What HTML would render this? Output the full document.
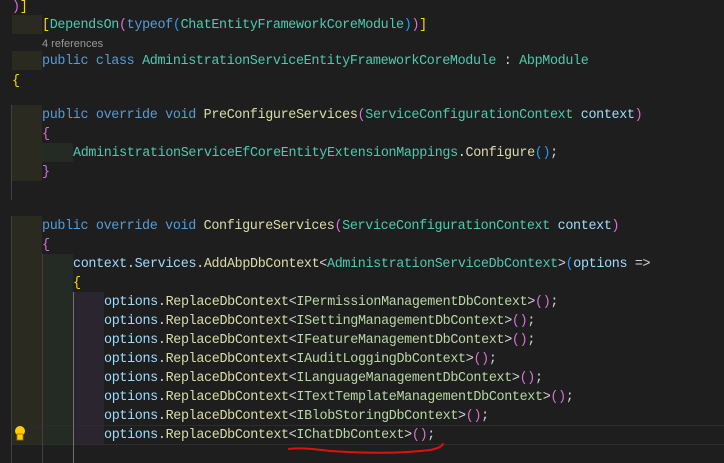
<!DOCTYPE html>
<html><head><meta charset="utf-8"><style>
body{margin:0;width:724px;height:463px;background:#1e1e1e;overflow:hidden;position:relative;font-family:"Liberation Mono",monospace;font-size:13.4px;letter-spacing:-0.34px;}
.l{position:absolute;left:0;height:19px;line-height:19px;margin-top:1px;white-space:pre;color:#d4d4d4;}
.hl{position:absolute;height:19px;}
.c1{left:12px;width:30px;background:#2a2a20;}
.c2{left:42px;width:31px;background:#232b24;}
.c3{left:73px;width:31px;background:#2b2530;}
.g{position:absolute;width:1px;background:#404040;}
.k{color:#569cd6}.t{color:#4ec9b0}.m{color:#dcdcaa}.p{color:#9cdcfe}.i{color:#b8d7a3}
.y{color:#ffd700}.pk{color:#da70d6}.b{color:#179fff}
</style></head><body>
<div class="hl c1" style="top:15px"></div>
<div class="hl c1" style="top:51px"></div>
<div class="hl c1" style="top:105px;height:76px"></div>
<div class="hl c2" style="top:143px"></div>
<div class="hl c1" style="top:216px;height:228px"></div>
<div class="hl c2" style="top:254px;height:190px"></div>
<div class="hl c3" style="top:292px;height:152px"></div>
<div style="position:absolute;left:12px;top:425px;width:712px;height:18px;border-top:1px solid #2c2c2c;border-bottom:1px solid #2c2c2c;"></div>
<div class="g" style="left:11px;top:105px;height:95px"></div>
<div class="g" style="left:11px;top:216px;height:247px"></div>
<div class="g" style="left:42px;top:254px;height:209px"></div>
<div class="g" style="left:73px;top:292px;height:171px;background:#707070"></div>

<div class="l" style="top:-3px;left:12px"><span class="pk">)</span><span class="y">]</span></div>
<div class="l" style="top:15px;left:42px"><span class="y">[</span><span class="t">DependsOn</span><span class="pk">(</span><span class="k">typeof</span><span class="b">(</span><span class="t">ChatEntityFrameworkCoreModule</span><span class="b">)</span><span class="pk">)</span><span class="y">]</span></div>
<div class="l" style="top:34px;left:42px;font-family:'Liberation Sans',sans-serif;font-size:11px;letter-spacing:0;color:#999">4 references</div>
<div class="l" style="top:51px;left:42px"><span class="k">public class</span> <span class="t">AdministrationServiceEntityFrameworkCoreModule</span> : <span class="t">AbpModule</span></div>
<div class="l" style="top:71px;left:12px"><span class="y">{</span></div>
<div class="l" style="top:105px;left:42px"><span class="k">public override void</span> <span class="m">PreConfigureServices</span><span class="pk">(</span><span class="t">ServiceConfigurationContext</span> <span class="p">context</span><span class="pk">)</span></div>
<div class="l" style="top:124px;left:42px"><span class="pk">{</span></div>
<div class="l" style="top:143px;left:73px"><span class="t">AdministrationServiceEfCoreEntityExtensionMappings</span>.<span class="m">Configure</span><span class="b">()</span>;</div>
<div class="l" style="top:162px;left:42px"><span class="pk">}</span></div>
<div class="l" style="top:216px;left:42px"><span class="k">public override void</span> <span class="m">ConfigureServices</span><span class="pk">(</span><span class="t">ServiceConfigurationContext</span> <span class="p">context</span><span class="pk">)</span></div>
<div class="l" style="top:235px;left:42px"><span class="pk">{</span></div>
<div class="l" style="top:254px;left:73px"><span class="p">context</span>.<span class="p">Services</span>.<span class="m">AddAbpDbContext</span>&lt;<span class="t">AdministrationServiceDbContext</span>&gt;<span class="b">(</span><span class="p">options</span> =&gt;</div>
<div class="l" style="top:273px;left:73px"><span class="y">{</span></div>
<div class="l" style="top:292px;left:104px"><span class="p">options</span>.<span class="m">ReplaceDbContext</span>&lt;<span class="i">IPermissionManagementDbContext</span>&gt;<span class="pk">()</span>;</div>
<div class="l" style="top:311px;left:104px"><span class="p">options</span>.<span class="m">ReplaceDbContext</span>&lt;<span class="i">ISettingManagementDbContext</span>&gt;<span class="pk">()</span>;</div>
<div class="l" style="top:330px;left:104px"><span class="p">options</span>.<span class="m">ReplaceDbContext</span>&lt;<span class="i">IFeatureManagementDbContext</span>&gt;<span class="pk">()</span>;</div>
<div class="l" style="top:349px;left:104px"><span class="p">options</span>.<span class="m">ReplaceDbContext</span>&lt;<span class="i">IAuditLoggingDbContext</span>&gt;<span class="pk">()</span>;</div>
<div class="l" style="top:368px;left:104px"><span class="p">options</span>.<span class="m">ReplaceDbContext</span>&lt;<span class="i">ILanguageManagementDbContext</span>&gt;<span class="pk">()</span>;</div>
<div class="l" style="top:387px;left:104px"><span class="p">options</span>.<span class="m">ReplaceDbContext</span>&lt;<span class="i">ITextTemplateManagementDbContext</span>&gt;<span class="pk">()</span>;</div>
<div class="l" style="top:406px;left:104px"><span class="p">options</span>.<span class="m">ReplaceDbContext</span>&lt;<span class="i">IBlobStoringDbContext</span>&gt;<span class="pk">()</span>;</div>
<div class="l" style="top:425px;left:104px"><span class="p">options</span>.<span class="m">ReplaceDbContext</span>&lt;<span class="i">IChatDbContext</span>&gt;<span class="pk">()</span>;</div>

<svg style="position:absolute;left:0;top:0" width="724" height="463">
<circle cx="20" cy="431" r="5" fill="#ffcc00"/>
<rect x="17" y="434" width="6" height="6" fill="#ffcc00" stroke="#a07800" stroke-width="0.8"/>
<path d="M289 449 Q300 447 330 451 Q390 455 430 450 Q441 448 443 444" fill="none" stroke="#e01010" stroke-width="2" stroke-linecap="round"/>
</svg>
</body></html>
